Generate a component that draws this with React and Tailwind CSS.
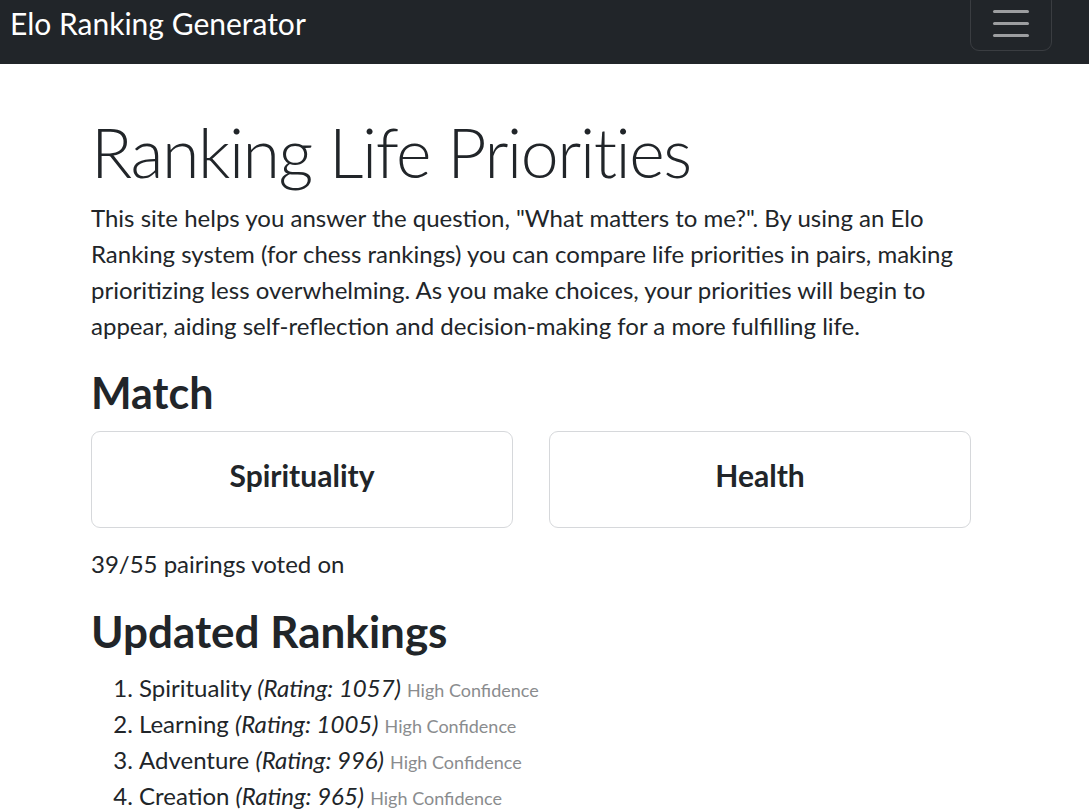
import React from "react";

const rankings = [
  { name: "Spirituality", rating: 1057 },
  { name: "Learning", rating: 1005 },
  { name: "Adventure", rating: 996 },
  { name: "Creation", rating: 965 },
];

const Navbar = () => (
  <nav className="h-[64px] bg-[#212529] flex justify-between items-start pl-[10px] pr-[37px] overflow-hidden">
    <a href="#" className="text-white text-[30px] leading-[45px] mt-[1px]">
      Elo Ranking Generator
    </a>
    <button className="mt-[-8px] w-[82px] h-[59px] rounded-[9px] border border-[#3a3d41] flex flex-col items-center justify-center gap-[9px] pt-[4px]">
      <span className="block w-[36px] h-[3px] rounded-full bg-[#9c9ea0]" />
      <span className="block w-[36px] h-[3px] rounded-full bg-[#9c9ea0]" />
      <span className="block w-[36px] h-[3px] rounded-full bg-[#9c9ea0]" />
    </button>
  </nav>
);

const MatchCard = ({ label }) => (
  <button className="h-[97px] rounded-[9px] border border-[#d6d8db] bg-white flex items-center justify-center pb-[10px]">
    <span className="text-[30px] font-bold leading-[36px] text-[#212529]">{label}</span>
  </button>
);

export default function App() {
  return (
    <div className="min-h-screen bg-white text-[#212529] font-['Lato',_sans-serif]">
      <Navbar />

      <main className="w-[880px] ml-[91px]">
        {/* Title */}
        <h1 className="mt-[47px] text-[68px] font-light leading-[82px] tracking-[-1.4px]">
          Ranking Life Priorities
        </h1>
        <p className="mt-[7px] text-[24px] leading-[36px]">
          This site helps you answer the question, "What matters to me?". By using an Elo Ranking system (for chess
          rankings) you can compare life priorities in pairs, making prioritizing less overwhelming. As you make
          choices, your priorities will begin to appear, aiding self-reflection and decision-making for a more
          fulfilling life.
        </p>

        {/* Match */}
        <h2 className="mt-[24px] mb-[13px] text-[43px] font-bold leading-[50px]">Match</h2>
        <div className="grid grid-cols-2 gap-[36px]">
          <MatchCard label="Spirituality" />
          <MatchCard label="Health" />
        </div>
        <p className="mt-[18px] text-[24px] leading-[36px]">39/55 pairings voted on</p>

        {/* Rankings */}
        <h2 className="mt-[24px] mb-[14px] text-[44px] font-bold leading-[50px]">Updated Rankings</h2>
        <ol className="list-decimal pl-[48px] text-[24px] leading-[36px]">
          {rankings.map((r) => (
            <li key={r.name} className="h-[36px]">
              {r.name} <em>(Rating: {r.rating})</em>{" "}
              <small className="text-[18px] leading-none text-[#8a8c8e]">High Confidence</small>
            </li>
          ))}
        </ol>
      </main>
    </div>
  );
}
